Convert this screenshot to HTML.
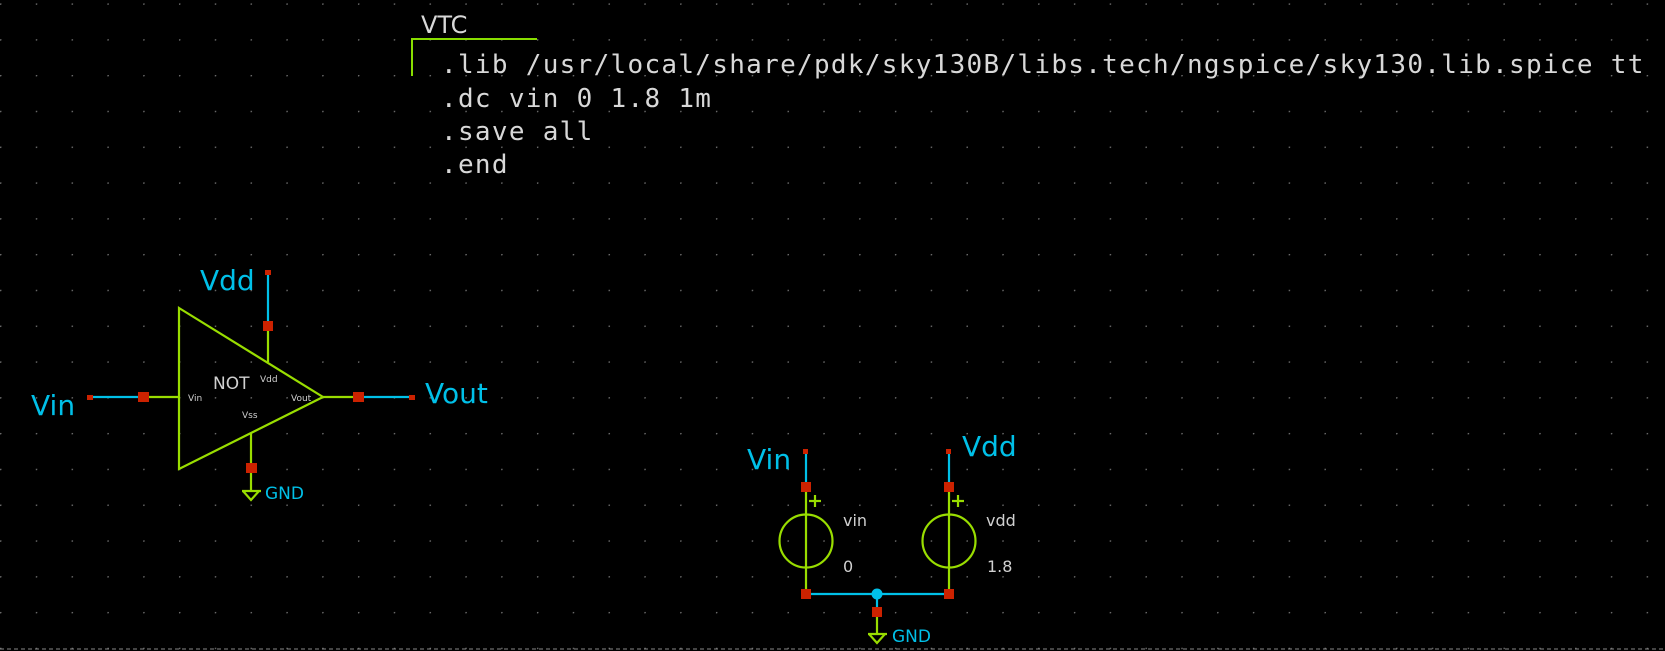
<!DOCTYPE html>
<html><head><style>
html,body{margin:0;padding:0;background:#000;}
body{width:1665px;height:651px;overflow:hidden;position:relative;
background-color:#000;
background-image:radial-gradient(circle at 0.6px 0.6px,#6a6a6a 0.8px,transparent 1px);
background-size:35.8px 35.8px;background-position:0 3.4px;}
svg{position:absolute;left:0;top:0;}
</style></head><body>
<svg width="1665" height="651" viewBox="0 0 1665 651" xmlns="http://www.w3.org/2000/svg" font-family="'DejaVu Sans', 'Liberation Sans', sans-serif">
<g fill="#d8d8d8" font-family="'DejaVu Sans Mono','Liberation Mono',monospace" font-size="26" letter-spacing="1.3">
<text x="421" y="33" font-family="'DejaVu Sans','Liberation Sans',sans-serif" font-size="24" letter-spacing="0">VTC</text>
<text x="441" y="73">.lib /usr/local/share/pdk/sky130B/libs.tech/ngspice/sky130.lib.spice tt</text>
<text x="441" y="107">.dc vin 0 1.8 1m</text>
<text x="441" y="140">.save all</text>
<text x="441" y="173">.end</text>
</g>
<polyline points="412,76 412,39 537,39" fill="none" stroke="#88dd00" stroke-width="2"/>
<line x1="0" y1="649" x2="1665" y2="649" stroke="#888" stroke-width="1" stroke-dasharray="4,3"/>

<g stroke="#99dd00" stroke-width="2.2" fill="none">
<polygon points="179,308 323,397 179,469"/>
<line x1="268" y1="326" x2="268" y2="362"/>
<line x1="143" y1="397" x2="179" y2="397"/>
<line x1="323" y1="397" x2="358" y2="397"/>
<line x1="251" y1="433" x2="251" y2="491"/>
<line x1="242" y1="491" x2="261" y2="491"/>
<polyline points="243,491 251,500 259,491"/>
</g>
<g stroke="#00c0e8" stroke-width="2.2">
<line x1="268" y1="272" x2="268" y2="326"/>
<line x1="89" y1="397" x2="143" y2="397"/>
<line x1="358" y1="397" x2="412" y2="397"/>
</g>
<g fill="#cc2200">
<rect x="263" y="321" width="10" height="10"/>
<rect x="138" y="392" width="11" height="10"/>
<rect x="353" y="392" width="11" height="10"/>
<rect x="246" y="463" width="11" height="10"/>
<rect x="265" y="270" width="6" height="5"/>
<rect x="87" y="395" width="6" height="5"/>
<rect x="409" y="395" width="6" height="5"/>
</g>
<g fill="#00c0e8">
<text x="200" y="290" font-size="28">Vdd</text>
<text x="31" y="415" font-size="28">Vin</text>
<text x="425" y="403" font-size="28">Vout</text>
<text x="265" y="499" font-size="17">GND</text>
</g>
<g fill="#d0d0d0">
<text x="213" y="389" font-size="17">NOT</text>
<text x="260" y="382" font-size="9">Vdd</text>
<text x="188" y="401" font-size="9">Vin</text>
<text x="291" y="401" font-size="9">Vout</text>
<text x="242" y="418" font-size="9">Vss</text>
</g>

<g stroke="#99dd00" stroke-width="2.2" fill="none">
<line x1="806" y1="487" x2="806" y2="594"/>
<circle cx="806" cy="541" r="26.5"/>
<line x1="949" y1="487" x2="949" y2="594"/>
<circle cx="949" cy="541" r="26.5"/>
<line x1="815" y1="495" x2="815" y2="507"/><line x1="809" y1="501" x2="821" y2="501"/>
<line x1="958" y1="495" x2="958" y2="507"/><line x1="952" y1="501" x2="964" y2="501"/>
<line x1="877" y1="612" x2="877" y2="634"/>
<line x1="868" y1="634" x2="887" y2="634"/>
<polyline points="869,634 877,643 885,634"/>
</g>
<g stroke="#00c0e8" stroke-width="2.2">
<line x1="806" y1="451" x2="806" y2="487"/>
<line x1="949" y1="451" x2="949" y2="487"/>
<line x1="806" y1="594" x2="949" y2="594"/>
<line x1="877" y1="594" x2="877" y2="612"/>
</g>
<circle cx="877" cy="594" r="5.5" fill="#00c0e8"/>
<g fill="#cc2200">
<rect x="801" y="482" width="10" height="10"/>
<rect x="944" y="482" width="10" height="10"/>
<rect x="801" y="589" width="10" height="10"/>
<rect x="944" y="589" width="10" height="10"/>
<rect x="872" y="607" width="10" height="10"/>
<rect x="803" y="449" width="5" height="5"/>
<rect x="946" y="449" width="5" height="5"/>
</g>
<g fill="#00c0e8">
<text x="747" y="469" font-size="28">Vin</text>
<text x="962" y="456" font-size="28">Vdd</text>
<text x="892" y="642" font-size="17">GND</text>
</g>
<g fill="#d0d0d0" font-size="16">
<text x="843" y="526">vin</text>
<text x="843" y="572">0</text>
<text x="986" y="526">vdd</text>
<text x="987" y="572">1.8</text>
</g>
</svg>
</body></html>
